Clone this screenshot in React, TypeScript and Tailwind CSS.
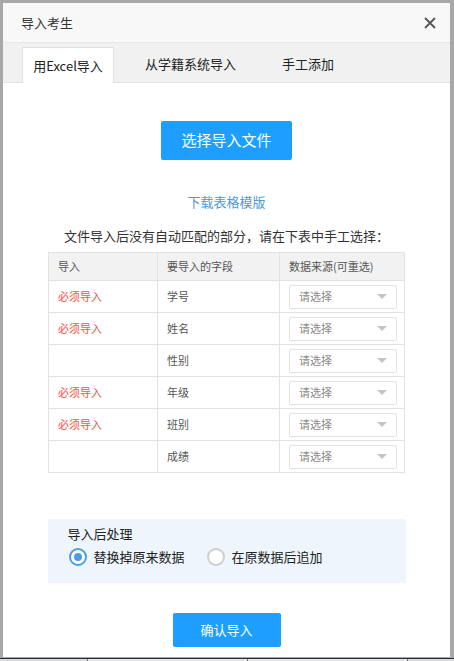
import { useState } from "react";

const rows = [
  { required: true, field: "学号" },
  { required: true, field: "姓名" },
  { required: false, field: "性别" },
  { required: true, field: "年级" },
  { required: true, field: "班别" },
  { required: false, field: "成绩" },
];

function Select() {
  return (
    <div className="flex h-[24px] w-[108px] items-center justify-between rounded-[2px] border border-[#e2e2e2] bg-white pl-[9px] pr-[9px]">
      <span className="text-[11px] text-[#8a8a8a]">请选择</span>
      <span className="h-0 w-0 border-x-[5px] border-t-[5px] border-x-transparent border-t-[#c4c4c4]" />
    </div>
  );
}

function Radio({ checked, label, onClick }: { checked: boolean; label: string; onClick: () => void }) {
  return (
    <button type="button" onClick={onClick} className="flex items-center gap-[7px]">
      <span
        className={
          checked
            ? "flex h-[18px] w-[18px] items-center justify-center rounded-full border-2 border-[#4a9de2] bg-white"
            : "flex h-[18px] w-[18px] items-center justify-center rounded-full border-2 border-[#cfcfcf] bg-white"
        }
      >
        {checked && <span className="h-[8px] w-[8px] rounded-full bg-[#4a9de2]" />}
      </span>
      <span className="text-[13px] text-[#222]">{label}</span>
    </button>
  );
}

export default function App() {
  const [mode, setMode] = useState("replace");

  return (
    <div
      className="flex h-[661px] w-[454px] flex-col overflow-hidden bg-[#a8a8a8]"
      style={{ fontFamily: '"Noto Sans CJK SC", "Noto Sans", sans-serif' }}
    >
      <div className="ml-[3px] mt-[3px] flex h-[654px] w-[447px] flex-col bg-white">
        {/* header */}
        <div className="flex h-[40px] shrink-0 items-center justify-between border-b border-[#e8e8e8] bg-[#f8f8f8] pl-[18px] pr-[14px]">
          <span className="text-[13px] text-[#333]">导入考生</span>
          <svg width="12" height="12" viewBox="0 0 12 12" className="text-[#555]">
            <path d="M1 1 L11 11 M11 1 L1 11" stroke="currentColor" strokeWidth="1.8" />
          </svg>
        </div>

        {/* tabs */}
        <div className="flex h-[40px] shrink-0 items-end border-b border-[#e2e2e2] bg-[#f1f1f1] pl-[19px]">
          <div className="-mb-px flex h-[36px] w-[92px] items-center justify-center border border-b-0 border-[#e2e2e2] bg-white text-[13px] text-[#222]">
            用Excel导入
          </div>
          <div className="ml-[31px] flex h-[36px] items-center text-[13px] text-[#222]">从学籍系统导入</div>
          <div className="ml-[46px] flex h-[36px] items-center text-[13px] text-[#222]">手工添加</div>
        </div>

        {/* body */}
        <div className="flex flex-col items-center">
          <button
            type="button"
            className="mt-[38px] flex h-[39px] w-[131px] items-center justify-center rounded-[2px] bg-[#1e9fff] text-[15px] text-white"
          >
            选择导入文件
          </button>

          <a className="mt-[33px] text-[13px] leading-[18px] text-[#4d9ad8]">下载表格模版</a>

          <p className="mt-[16px] text-[13px] leading-[18px] text-[#333]">
            文件导入后没有自动匹配的部分，请在下表中手工选择：
          </p>

          <table className="mt-[7px] w-[357px] border-collapse text-[11px] text-[#555]">
            <thead>
              <tr className="h-[28px] bg-[#f2f2f2]">
                <th className="w-[109px] border border-[#e2e2e2] pl-[9px] text-left font-normal">导入</th>
                <th className="w-[122px] border border-[#e2e2e2] pl-[9px] text-left font-normal">要导入的字段</th>
                <th className="border border-[#e2e2e2] pl-[9px] text-left font-normal">数据来源(可重选)</th>
              </tr>
            </thead>
            <tbody>
              {rows.map((r) => (
                <tr key={r.field} className="h-[32px]">
                  <td className="border border-[#e2e2e2] pl-[9px] text-[#f24e3c]">{r.required ? "必须导入" : ""}</td>
                  <td className="border border-[#e2e2e2] pl-[9px]">{r.field}</td>
                  <td className="border border-[#e2e2e2] pl-[9px]">
                    <Select />
                  </td>
                </tr>
              ))}
            </tbody>
          </table>

          {/* after import */}
          <div className="mt-[46px] flex h-[64px] w-[358px] flex-col bg-[#eef5fc] px-[20px] pt-[6px]">
            <span className="text-[13px] leading-[18px] text-[#222]">导入后处理</span>
            <div className="mt-[4px] flex items-center gap-[22px] pl-[1px]">
              <Radio checked={mode === "replace"} label="替换掉原来数据" onClick={() => setMode("replace")} />
              <Radio checked={mode === "append"} label="在原数据后追加" onClick={() => setMode("append")} />
            </div>
          </div>

          <button
            type="button"
            className="mt-[30px] flex h-[34px] w-[108px] items-center justify-center rounded-[2px] bg-[#1e9fff] text-[13px] text-white"
          >
            确认导入
          </button>
        </div>
      </div>

      {/* page behind the dialog */}
      <div className="mt-[1px] flex h-[3px] border-t border-[#2b2b2b]">
        <div className="w-[88px] border-r border-[#777] bg-[#d9dde3]" />
        <div className="w-[160px] border-r border-[#777] bg-[#e4e7eb]" />
        <div className="w-[160px] border-r border-[#777] bg-[#e4e7eb]" />
        <div className="flex-1 bg-[#d9dde3]" />
      </div>
    </div>
  );
}
